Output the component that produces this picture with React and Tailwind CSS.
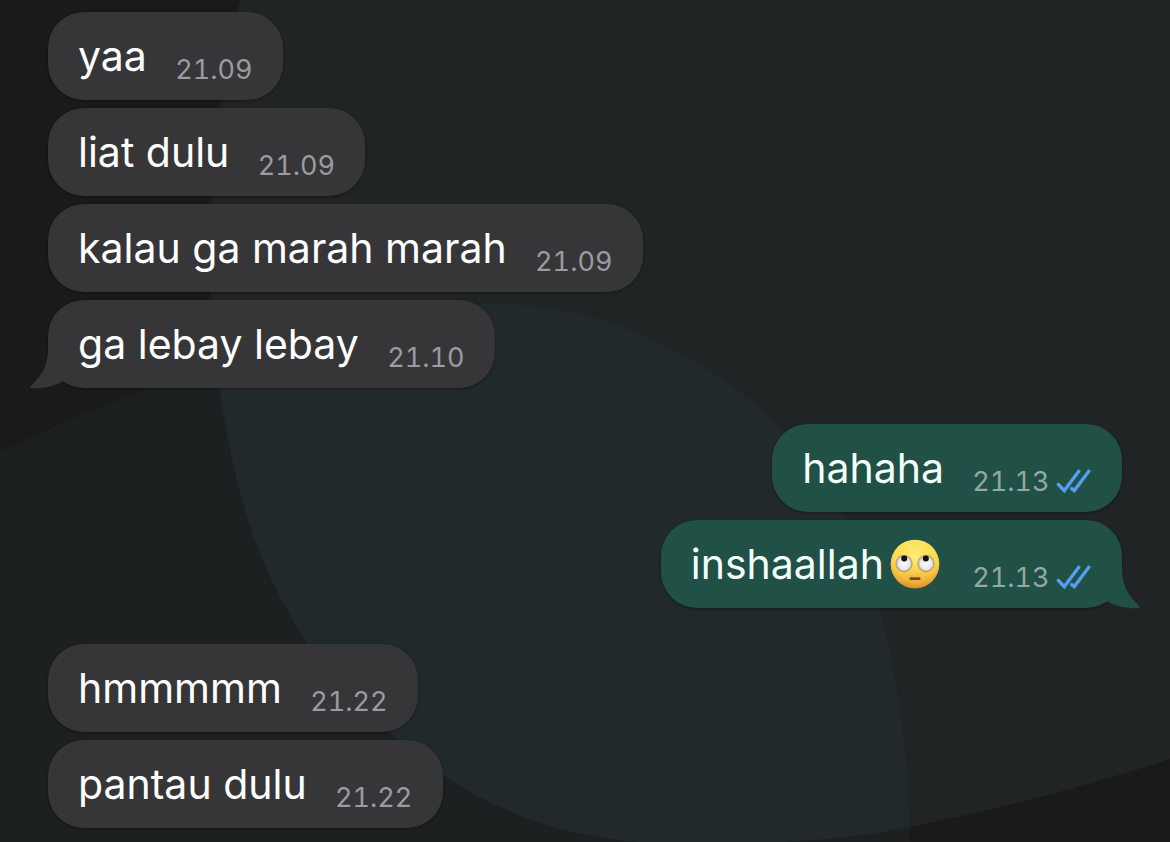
const groups = [
  {
    side: 'in',
    messages: [
      { text: 'yaa', time: '21.09' },
      { text: 'liat dulu', time: '21.09' },
      { text: 'kalau ga marah marah', time: '21.09' },
      { text: 'ga lebay lebay', time: '21.10', tail: true },
    ],
  },
  {
    side: 'out',
    messages: [
      { text: 'hahaha', time: '21.13' },
      { text: 'inshaallah', emoji: true, time: '21.13', tail: true },
    ],
  },
  {
    side: 'in',
    messages: [
      { text: 'hmmmmm', time: '21.22' },
      { text: 'pantau dulu', time: '21.22' },
    ],
  },
];

function Wallpaper() {
  return (
    <svg
      className="absolute inset-0 h-full w-full"
      viewBox="0 0 1170 842"
      preserveAspectRatio="none"
      aria-hidden="true"
    >
      <defs>
        <clipPath id="disc">
          <path d="M240 0C222 80 211 150 210 245C210 330 218 400 238 485C255 550 276 594 306 642C332 678 362 708 395 737C410 751 428 765 444 776C505 816 570 837 640 842H780C826 840 870 835 910 827C1000 809 1090 785 1170 759V0Z" />
        </clipPath>
      </defs>
      <path
        fill="#1c2020"
        d="M0 452C50 428 100 406 150 388C260 345 370 303 500 304C610 306 710 357 783 430C830 480 862 545 880 608C900 690 909 760 910 842H0Z"
      />
      <g clipPath="url(#disc)">
        <rect width="1170" height="842" fill="#202424" />
        <path
          fill="#22292b"
          d="M0 452C50 428 100 406 150 388C260 345 370 303 500 304C610 306 710 357 783 430C830 480 862 545 880 608C900 690 909 760 910 842H0Z"
        />
      </g>
    </svg>
  );
}

function Tail({ out }) {
  return (
    <svg
      viewBox="0 0 40 42"
      className={
        out
          ? 'absolute -right-[18px] -bottom-[2px] h-[42px] w-10 -scale-x-100 text-[#215046]'
          : 'absolute -left-[18px] -bottom-[2px] h-[42px] w-10 text-[#363638]'
      }
      aria-hidden="true"
    >
      <path
        fill="currentColor"
        d="M18 0C18 17 13 26 1 38C0 39.500 0.500 40.200 2 40.300C14 40.700 24 38 32.500 33.500L40 36V0Z"
      />
    </svg>
  );
}

function ReadTicks() {
  return (
    <svg
      viewBox="0 0 36 25"
      className="mb-0.5 h-[25px] w-9"
      role="img"
      aria-label="Read"
      fill="none"
      stroke="#569df2"
      strokeWidth="3.4"
      strokeLinecap="round"
      strokeLinejoin="miter"
    >
      <path d="M2.400 15.500L8.300 21.600L22.800 2.200" />
      <path d="M15.800 19.600L18.300 21.600L32.800 2.200" />
    </svg>
  );
}

function RollingEyes() {
  return (
    <svg viewBox="0 0 50 50" className="mr-1 ml-1.5 size-[50px]" role="img" aria-label="Face with rolling eyes">
      <defs>
        <linearGradient id="skin" x1="0" y1="0" x2="0" y2="1">
          <stop offset="0" stopColor="#fbe55c" />
          <stop offset="0.500" stopColor="#fbd64c" />
          <stop offset="0.800" stopColor="#f3b63b" />
          <stop offset="1" stopColor="#e4962f" />
        </linearGradient>
        <radialGradient id="shine" cx="0.5" cy="0.35" r="0.65">
          <stop offset="0" stopColor="#fff79a" stopOpacity="0.7" />
          <stop offset="0.600" stopColor="#ffe55c" stopOpacity="0.1" />
          <stop offset="1" stopColor="#dc8729" stopOpacity="0.8" />
        </radialGradient>
        <radialGradient id="eye">
          <stop offset="0" stopColor="#f9f9fa" />
          <stop offset="0.720" stopColor="#e8e8ea" />
          <stop offset="1" stopColor="#a8a09a" />
        </radialGradient>
      </defs>
      <circle cx="25" cy="25" r="24.300" fill="url(#skin)" />
      <circle cx="25" cy="25" r="24.300" fill="url(#shine)" />
      <circle cx="14" cy="24.500" r="8.200" fill="url(#eye)" stroke="#a68b48" strokeWidth="0.600" />
      <circle cx="36" cy="24.500" r="8.200" fill="url(#eye)" stroke="#a68b48" strokeWidth="0.600" />
      <circle cx="14.200" cy="19.500" r="3" fill="#17100c" />
      <circle cx="35.800" cy="19.500" r="3" fill="#17100c" />
      <rect x="19.500" y="38.200" width="11" height="2.800" rx="1.200" fill="#7b4a13" />
    </svg>
  );
}

function Message({ text, time, tail, emoji, out }) {
  return (
    <li
      className={
        out
          ? 'relative flex h-[88px] items-center rounded-[36px] bg-[#215046] px-[30px] text-[#f4fffc] shadow-[0_1px_3px_rgba(0,0,0,0.35)]'
          : 'relative flex h-[88px] items-center rounded-[36px] bg-[#363638] px-[30px] text-white shadow-[0_1px_3px_rgba(0,0,0,0.35)]'
      }
    >
      {tail && <Tail out={out} />}
      <p className="relative flex items-center text-[41px] leading-[48px]">
        {text}
        {emoji && <RollingEyes />}
      </p>
      <div
        className={
          out
            ? 'relative ml-7 flex items-center gap-1.5 pt-7 text-[#8fa9a3]'
            : 'relative ml-7 flex items-center pt-7 text-[#9b9ba0]'
        }
      >
        <time className="min-w-[78px] text-center text-[27px] leading-8 tabular-nums">{time}</time>
        {out && <ReadTicks />}
      </div>
    </li>
  );
}

export default function App() {
  return (
    <main className="relative min-h-screen bg-[#1a1a1a] font-['Inter','Liberation_Sans',sans-serif]">
      <Wallpaper />
      <div className="relative flex flex-col gap-9 px-12 pt-3 pb-3.5">
        {groups.map((group, i) => (
          <ul
            key={i}
            className={
              group.side === 'out' ? 'flex flex-col items-end gap-2' : 'flex flex-col items-start gap-2'
            }
          >
            {group.messages.map((message) => (
              <Message key={message.text} {...message} out={group.side === 'out'} />
            ))}
          </ul>
        ))}
      </div>
    </main>
  );
}
